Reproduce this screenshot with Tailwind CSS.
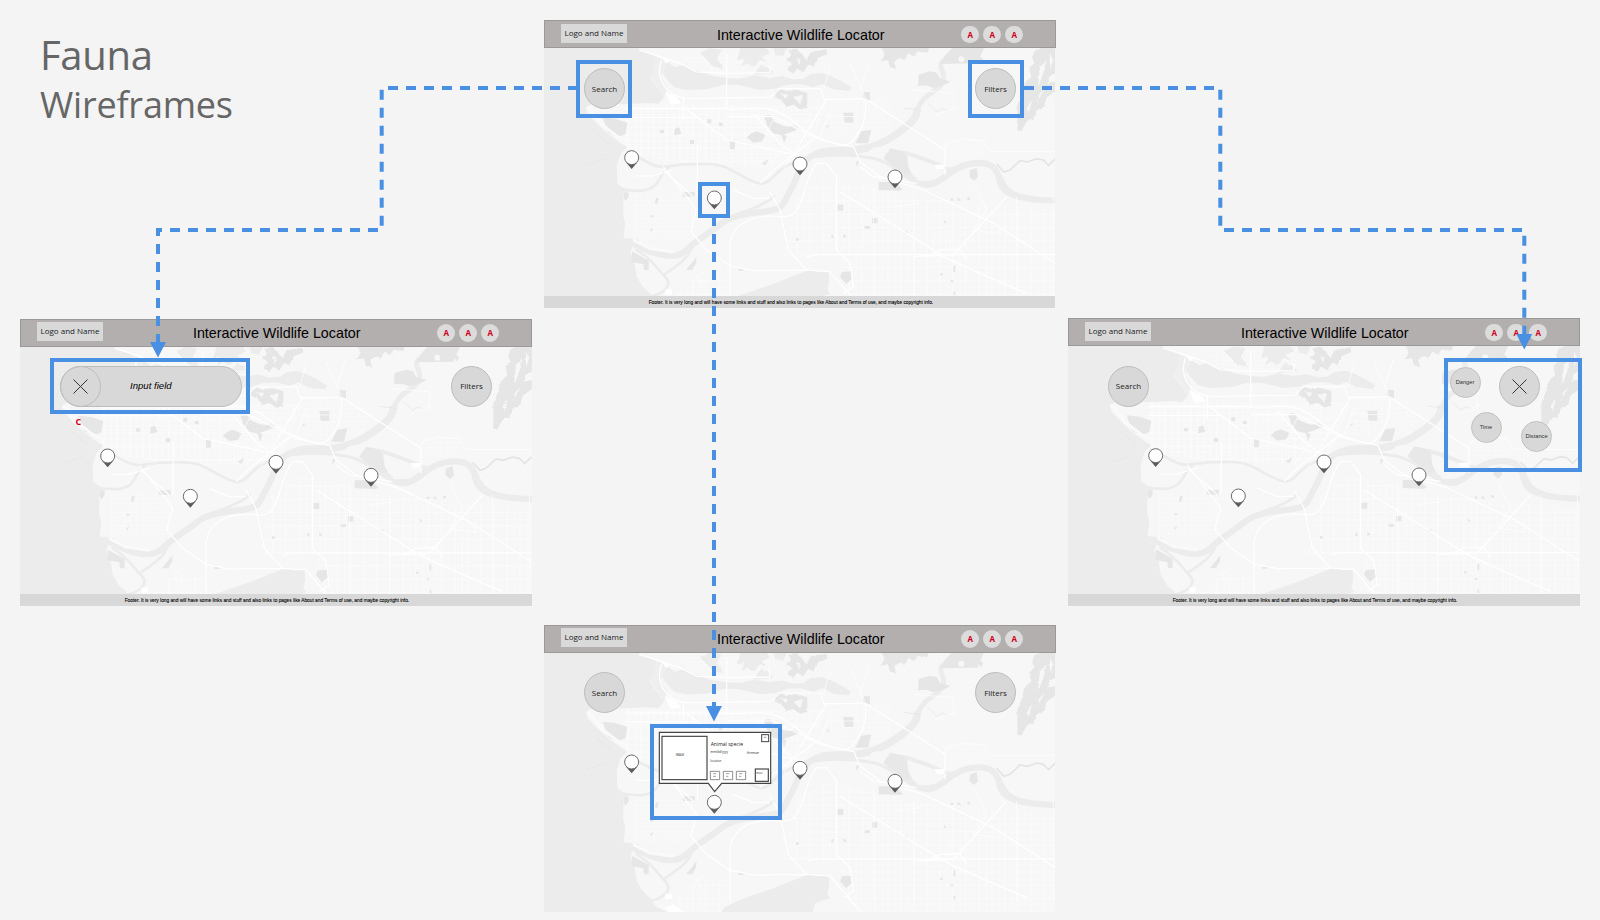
<!DOCTYPE html>
<html lang="en">
<head>
<meta charset="utf-8">
<title>Fauna Wireframes</title>
<script src="https://cdn.jsdelivr.net/npm/@tailwindcss/browser@4"></script>
</head>
<body class="bg-[#f4f4f4]">

<!-- Shared drawings: base map and map pins, in units of a third of a pixel -->
<svg class="absolute" width="0" height="0" aria-hidden="true">
  <defs>
    <filter id="ragged" x="0" y="0" width="100%" height="100%"><feTurbulence type="fractalNoise" baseFrequency=".12" numOctaves="2" seed="4"/><feDisplacementMap in="SourceGraphic" scale="8" xChannelSelector="R" yChannelSelector="G"/></filter>
    <pattern id="fine" width="19" height="13" patternUnits="userSpaceOnUse"><path d="M0 1H19M1 0V13" stroke="#fff" stroke-width="1.3" opacity=".5" fill="none"/></pattern>
    <pattern id="wide" width="39" height="40" patternUnits="userSpaceOnUse"><path d="M0 13H39M30 0V40" stroke="#fff" stroke-width="1.8" opacity=".75" fill="none"/><path d="M0 33H39M12 0V40" stroke="#fff" stroke-width="1.1" opacity=".5"/></pattern>
    <g id="pin"><path d="M-17 14L0 34L17 14Z" fill="#5a5a5a"/><circle r="21" fill="#fff" stroke="#6c6c6c" stroke-width="3"/></g>
    <g id="map">
      <rect x="0" y="100" width="1560" height="820" fill="#f7f7f7"/>
      <!-- street grids -->
      <path d="M255 285H860L800 440 700 470 560 470 400 455 290 440 255 400Z" fill="url(#fine)"/>
      <path d="M255 285H860L800 440 700 470 560 470 400 455 290 440 255 400Z" fill="url(#wide)"/>
      <path d="M280 548H470V690H280Z" fill="url(#fine)"/>
      <path d="M860 500L1100 560 1546 600V905H940L890 740 730 740 770 560Z" fill="url(#wide)"/>
      <path d="M850 520H1080V720H850Z" fill="url(#fine)" opacity=".5"/>
      <path d="M860 270H1050V390H860ZM1210 390H1340V450H1210ZM400 120H700V190H480Z" fill="url(#fine)"/>
      <path d="M470 800H560V905H400V860Z" fill="url(#wide)"/>
      <path d="M1160 650H1290V790H1160Z" fill="url(#fine)" opacity=".6"/>
      <!-- water -->
      <g fill="#ececec">
        <path d="M0 100H280L305 124 340 134 358 150 346 172 330 203 348 228 372 262 356 281 320 279 250 282 190 283 150 284 139 292 142 310 170 340 205 372 240 398 262 412 242 432 230 470 232 522 268 545 250 552 250 620 256 640 251 683 280 690 272 728 284 760 290 800 308 830 330 850 345 875 385 895 400 920H0Z"/>
        <path d="M352 166L385 158 405 172 432 164 452 178 486 186 510 196 560 204 600 206 640 196 690 204 726 198 758 208 790 206 812 192 846 188 872 198 905 214 934 232 926 243 880 238 846 222 820 232 780 222 740 224 706 236 660 240 620 230 590 224 550 224 500 238 440 240 402 232 378 205Z"/>
        <path d="M532 920L552 880 600 856 640 842 700 822 760 798 806 780 836 786 866 786 868 812 862 838 870 852 826 866 814 905 816 920Z"/>
        <path d="M1050 415L1100 425 1105 470 1120 500 1090 500 1060 470 1030 445Z" fill="#e8e8e8"/>
      </g>
      <g fill="none" stroke="#ececec" stroke-linecap="round" stroke-linejoin="round">
        <path stroke-width="8" d="M240 536C290 546 330 548 350 520S370 480 390 470M262 425C300 440 340 475 375 470S440 460 500 462S570 480 610 500S670 534 700 500S760 460 800 440"/>
        <path stroke-width="22" d="M830 432C870 415 900 425 950 420S1040 395 1080 365S1130 320 1132 300"/>
        <path stroke-width="15" d="M1132 300C1150 250 1185 250 1205 222S1190 170 1206 155"/>
        <path stroke-width="19" d="M820 435C780 455 775 500 752 540S735 590 700 600S590 605 545 640S470 690 440 720S350 740 270 695"/>
        <path stroke-width="8" d="M700 560C650 605 590 600 540 645M455 710C450 745 400 775 370 795M290 720C340 750 350 775 375 800S375 850 330 860"/>
        <path stroke-width="9" d="M820 440C880 432 950 435 1000 445S1090 500 1130 520S1190 525 1215 500"/>
        <path stroke-width="19" d="M1110 500C1140 530 1180 530 1215 500S1290 455 1330 460S1370 490 1390 525S1460 570 1546 572"/>
        <path stroke-width="12" d="M1100 430C1130 440 1180 455 1205 470S1250 480 1280 462"/>
        <path stroke-width="7" d="M1370 490C1370 540 1400 560 1450 568"/>
        <path stroke-width="12" d="M680 325C700 345 730 360 770 355"/>
      </g>
      <ellipse cx="1018" cy="422" rx="28" ry="11" fill="#f7f7f7"/>
      <!-- hills, with ragged edges -->
      <g fill="#e6e6e6" filter="url(#ragged)">
        <path d="M600 114L680 114 690 130 664 140 684 158 660 150 640 170 620 160 604 172 612 146 590 150 598 130ZM510 114L545 120 530 146 552 176 520 170 500 150 480 130Z" fill="#ececec"/>
        <path d="M745 120L770 116 800 150 812 126 860 118 862 132 834 144 820 170 804 164 790 186 770 176 760 192 742 178 758 160 738 150 754 138Z"/>
        <path d="M700 114H742L728 140 706 134ZM640 196L664 164 690 176 700 190Z" fill="#ececec"/>
        <path d="M1022 110H1170L1160 128 1134 124 1120 140 1106 130 1094 152 1080 142 1062 158 1070 178 1050 172 1044 150 1022 154 1034 132Z"/>
        <path d="M1484 122L1520 108H1550V190L1530 196 1522 220 1550 214V240L1520 262 1512 290 1490 300 1480 326 1462 330 1444 364 1432 360V286L1446 250 1454 220 1474 200 1466 174 1484 160 1476 140Z"/>
        <path d="M706 242L724 236 740 244 770 240 802 248V294L780 298 760 284 740 290 726 272 706 262Z"/>
        <path d="M722 250L744 254 738 266ZM760 262L788 254 782 284ZM1500 170L1520 150 1508 196 1494 230ZM1500 250L1514 236 1490 280ZM770 140L782 152 776 166ZM1530 130L1540 150 1530 176ZM1462 290L1476 270 1466 310Z" fill="#f7f7f7"/>
      </g>
      <!-- parks -->
      <g fill="#e6e6e6">
        <path d="M188 322L225 326 262 338 256 372 232 382 204 368Z"/>
        <path d="M350 140L372 150 378 170 362 200 382 232 372 262 350 228 332 203Z" fill="#efefef"/>
        <path d="M1236 114H1332L1312 160 1200 162 1212 140Z"/>
        <path d="M1136 194L1170 184 1190 188 1200 205 1232 215 1210 226 1180 234 1160 226 1134 228Z"/>
        <path d="M910 308H940V338H914ZM964 364L994 360 984 400H946ZM970 246H990V270H970ZM634 370L650 364 678 376 668 394 640 398 620 382ZM672 318L690 314 704 336 740 352 766 346 764 362 726 376 700 370 682 348ZM570 392H586L584 418H570ZM404 356L418 352 424 372 402 376ZM1016 516L1064 516 1088 538 1080 542 1016 540ZM892 584H910V602H892ZM996 624H1012V640H996ZM974 648H990V656H974ZM428 546H464V560H428ZM252 548H266V560L256 574 250 560ZM348 564H356L352 582 344 578ZM276 724L326 752V780L312 780 310 762 274 756ZM438 780L470 740 468 760 456 780ZM906 786L934 784 936 806 918 822 900 800Z"/>
        <path d="M1290 480L1310 474 1314 500 1302 512 1288 500ZM948 455L960 450 950 470ZM664 460L686 448 676 466ZM502 328H514V340H502ZM360 360H372V370H360ZM450 390H462V402H450ZM536 338H548V348H536ZM724 372L740 378 732 400ZM768 684H776V692H768ZM874 674H880V684H874ZM910 670L920 680 910 684ZM1096 664H1102V672H1096ZM1232 565H1240V572H1232ZM1254 562L1264 572H1252ZM1282 562H1290V570H1282ZM1212 630L1220 640H1212ZM1240 768H1246V786H1240ZM1200 790H1208V796H1200ZM1232 810H1240V816H1232ZM1240 845H1246V855H1240ZM288 688L298 690 290 696ZM332 616H340V622H332ZM330 660L340 654 334 666ZM858 350L868 344 864 354ZM595 776H610V782H595ZM1310 134L1330 146 1322 160Z"/>
      </g>
      <g fill="#f7f7f7"><circle cx="1264" cy="148" r="9"/><path d="M1140 462C1130 450 1190 462 1206 480S1160 520 1130 510Z"/></g>
      <path d="M1370 462L1392 486 1410 480 1440 452 1462 456 1490 446 1510 450 1526 466 1546 446" fill="none" stroke="#e4e4e4" stroke-width="5"/>
      <path d="M168 370L215 408M140 464L200 446M1090 294L1140 300M1164 280L1190 306 1206 296 1222 302" fill="none" stroke="#e4e4e4" stroke-width="2"/>
      <path d="M140 292L152 300 186 344 230 378 258 392 268 420M280 690L330 716 400 726" fill="none" stroke="#fafafa" stroke-width="9"/>
      <!-- roads -->
      <g fill="none" stroke="#fff" stroke-linejoin="round" stroke-width="3.6">
        <path d="M296 120L360 140 420 160 470 186 560 190 690 188V168M365 150C350 185 360 225 395 250S450 262 690 262L720 236 842 236 852 268H922L975 266 1215 420V495"/>
        <path d="M975 266C985 320 965 360 940 390S880 400 830 380 800 360 740 320 640 300 560 298V130M430 290L560 390 700 420 790 440"/>
        <path d="M640 310L720 400 760 430M830 380L700 480 660 520M560 320H700L840 390 942 412 960 455 1020 500 1150 540 1360 640 1546 760M960 470L1000 500 1130 520"/>
        <path d="M370 470L470 600 452 664 500 720 570 768 640 782 800 780 870 785 960 890M370 480L460 560M690 545L720 600 745 720 800 780M570 860V700C580 640 640 610 720 620S780 520 830 460H860L890 500V720L930 760 940 830 910 850"/>
        <path d="M900 545L1100 670 1210 740 1320 790 1460 850M1120 740L1240 735 1400 560M800 740 830 734H1546M1160 740L1200 720 1260 718 1280 750"/>
        <path d="M255 296H560M255 322H470M430 262V330M860 268L780 400M286 498H340L400 480M472 400V560M580 540L640 565H690"/>
      </g>
      <g fill="none" stroke="#fff" stroke-width="2.2" opacity=".9">
        <path d="M1212 420L1220 400 1270 386 1330 392 1350 424H1546M930 160L975 262M990 150L960 240M860 320H960M870 300L840 380M1120 240L1240 250V310M1180 320L1250 290M500 780L470 800 490 830M1300 520L1340 600 1300 660 1380 672V640M1230 660V740M1060 590L1140 580M1430 560V860M1340 700V857M1540 560V857M1000 520V857M1120 560V857M850 240L870 170M480 130L520 180M700 330L660 410M740 400L690 470M780 400L730 480"/>
      </g>
      <path d="M360 138L392 150 380 160ZM375 245L410 262 424 280 392 285ZM1184 464H1212V478H1190ZM376 838H396V854H376ZM372 880L395 900 450 905 400 870Z" fill="#fff"/>
    </g>
    <g id="pins">
      <use href="#pin" x="275" y="443"/><use href="#pin" x="523" y="564"/><use href="#pin" x="780" y="462"/><use href="#pin" x="1065" y="501"/>
    </g>
    <g id="footline"><text x="104.7" y="7.7" font-family="'Liberation Sans',sans-serif" font-size="5.2" fill="#000" stroke="#000" stroke-width=".1" textLength="284.500" lengthAdjust="spacingAndGlyphs">Footer. It is very long and will have some links and stuff and also links to pages like About and Terms of use, and maybe copyright info.</text></g>
  </defs>
</svg>

<main class="relative w-[1600px] h-[920px] overflow-hidden bg-[#f4f4f4] font-['Open_Sans',sans-serif] text-[#222]">
  <h1 class="px-10 pt-[30px] text-[#666]">
    <span class="block text-[40px] leading-[50px] tracking-[-0.3px]">Fauna</span>
    <span class="block text-[36px] leading-[49px] tracking-[-0.2px]">Wireframes</span>
  </h1>

  <!-- Home screen -->
  <section class="absolute left-[544px] top-[20px] w-[512px]">
    <header class="flex h-7 items-center justify-between border border-[#9b9898] bg-[#b3afae] pl-4 pr-8">
      <span class="-mt-px flex h-[19px] w-[66px] items-center justify-center bg-[#d9d9d9] pb-px text-[8px] whitespace-nowrap">Logo and Name</span>
      <b class="ml-[13px] font-['Liberation_Sans',sans-serif] text-[14.3px] leading-none font-normal text-black pt-0.5">Interactive Wildlife Locator</b>
      <span class="flex gap-[4.5px] pt-px text-[8px] font-bold text-[#d0021b]"><i class="flex size-[17.5px] items-center justify-center rounded-full bg-[#dcdcdc] not-italic">A</i><i class="flex size-[17.5px] items-center justify-center rounded-full bg-[#dcdcdc] not-italic">A</i><i class="flex size-[17.5px] items-center justify-center rounded-full bg-[#dcdcdc] not-italic">A</i></span>
    </header>
    <div class="relative h-[248px]">
      <svg class="block h-[248px] w-[511px]" viewBox="12 114 1533 744"><use href="#map"/><use href="#pins"/></svg>
      <button class="absolute left-[40px] top-[20px] size-[41px] rounded-full border border-[#bdbdbd] bg-[#d8d8d8] text-[8px]">Search</button>
      <button class="absolute left-[431px] top-[20px] size-[41px] rounded-full border border-[#bdbdbd] bg-[#d8d8d8] text-[8px]">Filters</button>
    </div>
    <footer class="h-3 w-[511px] bg-[#d8d8d8]"><svg class="block h-3 w-[511px]"><use href="#footline"/></svg></footer>
  </section>

  <!-- Search open -->
  <section class="absolute left-[20px] top-[319px] w-[512px]">
    <header class="flex h-7 items-center justify-between border border-[#9b9898] bg-[#b3afae] pl-4 pr-8">
      <span class="-mt-[3px] flex h-[19px] w-[66px] items-center justify-center bg-[#d9d9d9] pb-px text-[8px] whitespace-nowrap">Logo and Name</span>
      <b class="ml-[13px] font-['Liberation_Sans',sans-serif] text-[14.3px] leading-none font-normal text-black pt-px">Interactive Wildlife Locator</b>
      <span class="flex gap-[4.5px] text-[8px] font-bold text-[#d0021b]"><i class="flex size-[17.5px] items-center justify-center rounded-full bg-[#dcdcdc] not-italic">A</i><i class="flex size-[17.5px] items-center justify-center rounded-full bg-[#dcdcdc] not-italic">A</i><i class="flex size-[17.5px] items-center justify-center rounded-full bg-[#dcdcdc] not-italic">A</i></span>
    </header>
    <div class="relative h-[247px]">
      <svg class="block h-[247px] w-[512px]" viewBox="12 116 1536 741"><use href="#map"/><use href="#pins"/></svg>
      <div class="absolute left-[40px] top-[19px] flex h-[41px] w-[182px] items-center rounded-full border border-[#bdbdbd] bg-[#d8d8d8]">
        <span class="-ml-px flex size-[41px] items-center justify-center rounded-full border border-[#bdbdbd]"><svg class="size-[15px]" viewBox="0 0 15 15"><path d="M.5 .5L14.5 14.5M14.5 .5L.5 14.5" stroke="#333" stroke-width="1" fill="none"/></svg></span>
        <span class="ml-[29px] font-['Liberation_Sans',sans-serif] text-[9.6px] italic text-black whitespace-nowrap">Input field</span>
      </div>
      <span class="absolute left-[55.5px] top-[69px] text-[9px] leading-3 font-bold text-[#d0021b]">C</span>
      <button class="absolute left-[431px] top-[19px] size-[41px] rounded-full border border-[#bdbdbd] bg-[#d8d8d8] pb-px text-[8px]">Filters</button>
    </div>
    <footer class="h-3 w-[512px] bg-[#d8d8d8]"><svg class="block h-3 w-[512px]"><use href="#footline"/></svg></footer>
  </section>

  <!-- Filters open -->
  <section class="absolute left-[1068px] top-[318px] w-[512px]">
    <header class="flex h-7 items-center justify-between border border-[#9b9898] bg-[#b3afae] pl-4 pr-8">
      <span class="-mt-px flex h-[19px] w-[66px] items-center justify-center bg-[#d9d9d9] pb-px text-[8px] whitespace-nowrap">Logo and Name</span>
      <b class="ml-[13px] font-['Liberation_Sans',sans-serif] text-[14.3px] leading-none font-normal text-black pt-0.5">Interactive Wildlife Locator</b>
      <span class="flex gap-[4.5px] pt-px text-[8px] font-bold text-[#d0021b]"><i class="flex size-[17.5px] items-center justify-center rounded-full bg-[#dcdcdc] not-italic">A</i><i class="flex size-[17.5px] items-center justify-center rounded-full bg-[#dcdcdc] not-italic">A</i><i class="flex size-[17.5px] items-center justify-center rounded-full bg-[#dcdcdc] not-italic">A</i></span>
    </header>
    <div class="relative h-[248px]">
      <svg class="block h-[248px] w-[512px]" viewBox="12 114 1536 744"><use href="#map"/><use href="#pins"/></svg>
      <button class="absolute left-[40px] top-[20px] size-[41px] rounded-full border border-[#bdbdbd] bg-[#d8d8d8] pb-px text-[8px]">Search</button>
      <button class="absolute left-[431px] top-[20px] flex size-[41px] items-center justify-center rounded-full border border-[#bdbdbd] bg-[#d8d8d8]"><svg class="size-[15px]" viewBox="0 0 15 15"><path d="M.5 .5L14.5 14.5M14.5 .5L.5 14.5" stroke="#333" stroke-width="1" fill="none"/></svg></button>
      <div class="font-['Liberation_Sans',sans-serif] text-[5.7px] text-[#333]">
        <span class="absolute left-[381.5px] top-[21px] flex size-[31px] items-center justify-center rounded-full border border-[#c2c2c2] bg-[#d8d8d8]">Danger</span>
        <span class="absolute left-[402.5px] top-[66px] flex size-[31px] items-center justify-center rounded-full border border-[#c2c2c2] bg-[#d8d8d8]">Time</span>
        <span class="absolute left-[452.5px] top-[75px] flex size-[31px] items-center justify-center rounded-full border border-[#c2c2c2] bg-[#d8d8d8] pl-px">Distance</span>
      </div>
    </div>
    <footer class="h-3 w-[512px] bg-[#d8d8d8]"><svg class="block h-3 w-[512px]"><use href="#footline"/></svg></footer>
  </section>

  <!-- Pin details -->
  <section class="absolute left-[544px] top-[625px] w-[512px]">
    <header class="flex h-7 items-center justify-between border border-[#9b9898] bg-[#b3afae] pl-4 pr-8">
      <span class="-mt-[3px] flex h-[19px] w-[66px] items-center justify-center bg-[#d9d9d9] pb-px text-[8px] whitespace-nowrap">Logo and Name</span>
      <b class="ml-[13px] font-['Liberation_Sans',sans-serif] text-[14.3px] leading-none font-normal text-black pt-px">Interactive Wildlife Locator</b>
      <span class="flex gap-[4.5px] text-[8px] font-bold text-[#d0021b]"><i class="flex size-[17.5px] items-center justify-center rounded-full bg-[#dcdcdc] not-italic">A</i><i class="flex size-[17.5px] items-center justify-center rounded-full bg-[#dcdcdc] not-italic">A</i><i class="flex size-[17.5px] items-center justify-center rounded-full bg-[#dcdcdc] not-italic">A</i></span>
    </header>
    <div class="relative h-[259px]">
      <svg class="block h-[259px] w-[511px]" viewBox="12 116 1533 777">
        <use href="#map"/><use href="#pins"/>
        <g transform="translate(0 -13)" fill="#fff" stroke="#444" font-family="'Open Sans',sans-serif">
          <path d="M358 367H692V520H545L524 545 505 520H358Z" stroke-width="3.5"/>
          <rect x="366" y="379" width="135" height="130" stroke-width="3.5"/>
          <rect x="665" y="374" width="21" height="21" stroke-width="3"/>
          <rect x="646" y="477" width="39" height="37" stroke-width="3.5"/>
          <path d="M511 484H539V509H511ZM550 484H578V509H550ZM589 484H617V509H589Z" stroke="#777" stroke-width="2.5"/>
          <path d="M519 491H529M519 499H528M558 491H568M558 499H565M597 491H607M597 499H604M671 382H679" stroke="#777" stroke-width="2"/>
          <g stroke="none" fill="#222">
            <text x="512" y="407" font-size="16" textLength="97" lengthAdjust="spacingAndGlyphs">Animal specie</text>
            <text x="407" y="438" font-size="8.5" textLength="26" lengthAdjust="spacingAndGlyphs">IMAGE</text>
            <text x="511" y="430" font-size="9.5" textLength="53" lengthAdjust="spacingAndGlyphs">mm/dd/yyyy</text>
            <text x="620" y="431" font-size="9.5" textLength="37" lengthAdjust="spacingAndGlyphs">hh:mmam</text>
            <text x="511" y="457" font-size="9.5" textLength="33" lengthAdjust="spacingAndGlyphs">location</text>
            <text x="649" y="493" font-size="8" textLength="19" lengthAdjust="spacingAndGlyphs">more</text>
          </g>
        </g>
      </svg>
      <button class="absolute left-[40px] top-[19px] size-[41px] rounded-full border border-[#bdbdbd] bg-[#d8d8d8] text-[8px]">Search</button>
      <button class="absolute left-[431px] top-[19px] size-[41px] rounded-full border border-[#bdbdbd] bg-[#d8d8d8] text-[8px]">Filters</button>
    </div>
  </section>

  <!-- Flow connectors and highlighted regions -->
  <svg class="absolute left-0 top-0" width="1600" height="920" viewBox="0 0 1600 920" fill="none" stroke="#4a90e2" stroke-width="4">
    <path d="M578 88H381.7V230H158V344" stroke-dasharray="10 8"/>
    <path d="M1024 88H1220.3V230H1524.3V336" stroke-dasharray="10 8"/>
    <path d="M714 216V708" stroke-dasharray="10 8"/>
    <path d="M578 62H630V116H578ZM970 62H1022V116H970ZM700 184H728V216H700ZM52 360H248V412H52ZM1446 360H1580V470H1446ZM652 726H780V818H652Z"/>
    <path d="M150 342H166L158 357.5ZM1516.300 334H1532.300L1524.300 349.500ZM706 706H722L714 721.500Z" fill="#4a90e2" stroke="none"/>
  </svg>
</main>
</body>
</html>
